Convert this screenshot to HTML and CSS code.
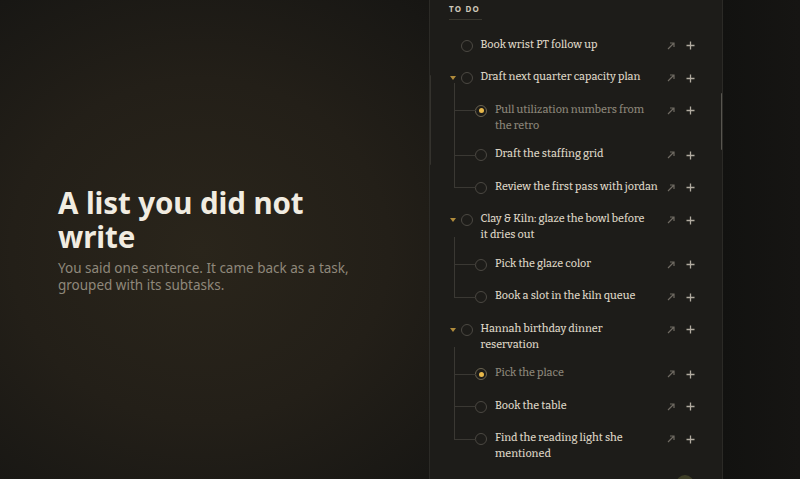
FILE: index.html
```html
<!DOCTYPE html>
<html lang="en">
<head>
<meta charset="utf-8">
<title>A list you did not write</title>
<link rel="stylesheet" href="styles.css">
</head>
<body>
<main class="stage">
  <section class="intro">
    <h1 class="intro-title">A list you did not write</h1>
    <p class="intro-sub">You said one sentence. It came back as a task, grouped with its subtasks.</p>
  </section>

  <section class="panel">
    <span class="thumb thumb-left"></span>
    <span class="thumb thumb-right"></span>
    <div class="scroll">
      <h2 class="label">TO DO</h2>
      <ul class="tasks">
        <li class="task">
          <div class="row">
            <span class="caret"></span>
            <span class="check"></span>
            <span class="title">Book wrist PT follow up</span>
            <span class="actions">
              <span class="act act-open"><svg viewBox="0 0 8 8" width="8" height="8"><path d="M1 7L7 1M3 1H7V5"/></svg></span>
              <span class="act act-add"><svg viewBox="0 0 9 9" width="9" height="9"><path d="M4.5 0.5V8.5M0.5 4.5H8.5"/></svg></span>
            </span>
          </div>
        </li>

        <li class="task">
          <div class="row">
            <span class="caret"><svg viewBox="0 0 6 4" width="6" height="4"><path d="M0 0H6L3 4Z"/></svg></span>
            <span class="check"></span>
            <span class="title">Draft next quarter capacity plan</span>
            <span class="actions">
              <span class="act act-open"><svg viewBox="0 0 8 8" width="8" height="8"><path d="M1 7L7 1M3 1H7V5"/></svg></span>
              <span class="act act-add"><svg viewBox="0 0 9 9" width="9" height="9"><path d="M4.5 0.5V8.5M0.5 4.5H8.5"/></svg></span>
            </span>
          </div>
          <ul class="subtasks">
            <li class="sub">
              <div class="row">
                <span class="check check-active"></span>
                <span class="title title-dim">Pull utilization numbers from the retro</span>
                <span class="actions">
                  <span class="act act-open"><svg viewBox="0 0 8 8" width="8" height="8"><path d="M1 7L7 1M3 1H7V5"/></svg></span>
                  <span class="act act-add"><svg viewBox="0 0 9 9" width="9" height="9"><path d="M4.5 0.5V8.5M0.5 4.5H8.5"/></svg></span>
                </span>
              </div>
            </li>
            <li class="sub">
              <div class="row">
                <span class="check"></span>
                <span class="title">Draft the staffing grid</span>
                <span class="actions">
                  <span class="act act-open"><svg viewBox="0 0 8 8" width="8" height="8"><path d="M1 7L7 1M3 1H7V5"/></svg></span>
                  <span class="act act-add"><svg viewBox="0 0 9 9" width="9" height="9"><path d="M4.5 0.5V8.5M0.5 4.5H8.5"/></svg></span>
                </span>
              </div>
            </li>
            <li class="sub">
              <div class="row">
                <span class="check"></span>
                <span class="title">Review the first pass with jordan</span>
                <span class="actions">
                  <span class="act act-open"><svg viewBox="0 0 8 8" width="8" height="8"><path d="M1 7L7 1M3 1H7V5"/></svg></span>
                  <span class="act act-add"><svg viewBox="0 0 9 9" width="9" height="9"><path d="M4.5 0.5V8.5M0.5 4.5H8.5"/></svg></span>
                </span>
              </div>
            </li>
          </ul>
        </li>

        <li class="task">
          <div class="row">
            <span class="caret"><svg viewBox="0 0 6 4" width="6" height="4"><path d="M0 0H6L3 4Z"/></svg></span>
            <span class="check"></span>
            <span class="title">Clay &amp; Kiln: glaze the bowl before<br>it dries out</span>
            <span class="actions">
              <span class="act act-open"><svg viewBox="0 0 8 8" width="8" height="8"><path d="M1 7L7 1M3 1H7V5"/></svg></span>
              <span class="act act-add"><svg viewBox="0 0 9 9" width="9" height="9"><path d="M4.5 0.5V8.5M0.5 4.5H8.5"/></svg></span>
            </span>
          </div>
          <ul class="subtasks">
            <li class="sub">
              <div class="row">
                <span class="check"></span>
                <span class="title">Pick the glaze color</span>
                <span class="actions">
                  <span class="act act-open"><svg viewBox="0 0 8 8" width="8" height="8"><path d="M1 7L7 1M3 1H7V5"/></svg></span>
                  <span class="act act-add"><svg viewBox="0 0 9 9" width="9" height="9"><path d="M4.5 0.5V8.5M0.5 4.5H8.5"/></svg></span>
                </span>
              </div>
            </li>
            <li class="sub">
              <div class="row">
                <span class="check"></span>
                <span class="title">Book a slot in the kiln queue</span>
                <span class="actions">
                  <span class="act act-open"><svg viewBox="0 0 8 8" width="8" height="8"><path d="M1 7L7 1M3 1H7V5"/></svg></span>
                  <span class="act act-add"><svg viewBox="0 0 9 9" width="9" height="9"><path d="M4.5 0.5V8.5M0.5 4.5H8.5"/></svg></span>
                </span>
              </div>
            </li>
          </ul>
        </li>

        <li class="task">
          <div class="row">
            <span class="caret"><svg viewBox="0 0 6 4" width="6" height="4"><path d="M0 0H6L3 4Z"/></svg></span>
            <span class="check"></span>
            <span class="title">Hannah birthday dinner reservation</span>
            <span class="actions">
              <span class="act act-open"><svg viewBox="0 0 8 8" width="8" height="8"><path d="M1 7L7 1M3 1H7V5"/></svg></span>
              <span class="act act-add"><svg viewBox="0 0 9 9" width="9" height="9"><path d="M4.5 0.5V8.5M0.5 4.5H8.5"/></svg></span>
            </span>
          </div>
          <ul class="subtasks">
            <li class="sub">
              <div class="row">
                <span class="check check-active"></span>
                <span class="title title-dim">Pick the place</span>
                <span class="actions">
                  <span class="act act-open"><svg viewBox="0 0 8 8" width="8" height="8"><path d="M1 7L7 1M3 1H7V5"/></svg></span>
                  <span class="act act-add"><svg viewBox="0 0 9 9" width="9" height="9"><path d="M4.5 0.5V8.5M0.5 4.5H8.5"/></svg></span>
                </span>
              </div>
            </li>
            <li class="sub">
              <div class="row">
                <span class="check"></span>
                <span class="title">Book the table</span>
                <span class="actions">
                  <span class="act act-open"><svg viewBox="0 0 8 8" width="8" height="8"><path d="M1 7L7 1M3 1H7V5"/></svg></span>
                  <span class="act act-add"><svg viewBox="0 0 9 9" width="9" height="9"><path d="M4.5 0.5V8.5M0.5 4.5H8.5"/></svg></span>
                </span>
              </div>
            </li>
            <li class="sub">
              <div class="row">
                <span class="check"></span>
                <span class="title">Find the reading light she mentioned</span>
                <span class="actions">
                  <span class="act act-open"><svg viewBox="0 0 8 8" width="8" height="8"><path d="M1 7L7 1M3 1H7V5"/></svg></span>
                  <span class="act act-add"><svg viewBox="0 0 9 9" width="9" height="9"><path d="M4.5 0.5V8.5M0.5 4.5H8.5"/></svg></span>
                </span>
              </div>
            </li>
          </ul>
        </li>
      </ul>
    </div>
    <span class="fab"></span>
  </section>

  <aside class="gutter"></aside>
</main>
</body>
</html>
```

FILE: styles.css
```css
* { box-sizing: border-box; }

html, body {
  margin: 0;
  padding: 0;
  height: 100%;
}

body {
  background: #141311;
  overflow: hidden;
}

.stage {
  display: flex;
  height: 479px;
  width: 800px;
  background:
    radial-gradient(ellipse 420px 380px at 200px 250px, #2a251b 0%, #231f18 45%, #181714 80%, #131210 100%);
}

.intro {
  flex: 0 0 429px;
  display: flex;
  flex-direction: column;
  justify-content: center;
  padding: 0 0 0 58px;
  font-family: "Noto Sans", "Open Sans", sans-serif;
}

.intro-title {
  margin: 0;
  font-size: 29.5px;
  line-height: 34px;
  font-weight: 700;
  color: #f1ece1;
  width: 300px;
  letter-spacing: -0.1px;
}

.intro-sub {
  margin: 6px 0 0;
  font-size: 13.5px;
  line-height: 17px;
  color: #8f887b;
  width: 300px;
}

.panel {
  position: relative;
  flex: 0 0 294px;
  height: 479px;
  background: #1d1c19;
  border-left: 1px solid #2b2a26;
  border-right: 1px solid #2b2a26;
  overflow: hidden;
}

.thumb {
  position: absolute;
  width: 2px;
  border-radius: 1px;
}

.thumb-left {
  left: -1px;
  top: 75px;
  height: 90px;
  background: #34322d;
}

.thumb-right {
  right: -1px;
  top: 93px;
  height: 57px;
  background: #57554f;
}

.scroll {
  padding: 4px 21px 0 19px;
}

.label {
  display: block;
  width: max-content;
  margin: 0 0 9px;
  padding: 0 2px 5px 0;
  font-family: "Noto Sans", "Open Sans", sans-serif;
  font-size: 8px;
  line-height: 10px;
  font-weight: 700;
  letter-spacing: 1.2px;
  color: #cfc8b9;
  border-bottom: 1px solid #3a382f;
}

.tasks, .subtasks {
  list-style: none;
  margin: 0;
  padding: 0;
}

.row {
  display: flex;
  align-items: flex-start;
  padding: 5.5px 0 5px;
  font-family: "Bitter", "Noto Serif", "DejaVu Serif", serif;
}

.caret {
  flex: 0 0 11.5px;
  height: 22px;
  display: flex;
  align-items: center;
  justify-content: flex-start;
  padding-left: 1px;
}

.caret svg { fill: #b08b3b; }

.check {
  flex: 0 0 12px;
  width: 12px;
  height: 12px;
  margin-top: 5px;
  border-radius: 50%;
  border: 1.2px solid #4b4842;
  display: flex;
  align-items: center;
  justify-content: center;
}

.check-active {
  border-color: #6a6351;
}

.check-active::after {
  content: "";
  width: 5px;
  height: 5px;
  border-radius: 50%;
  background: #e8b84a;
}

.title {
  flex: 1 1 auto;
  margin-left: 8px;
  padding-top: 2px;
  font-size: 10.8px;
  line-height: 16px;
  font-weight: 500;
  color: #dbd3c3;
}

.title-dim {
  color: #8a8478;
}

.actions {
  flex: 0 0 40px;
  height: 22px;
  display: flex;
  align-items: center;
  gap: 1px;
  margin-left: 2px;
}

.act {
  width: 19px;
  height: 19px;
  display: flex;
  align-items: center;
  justify-content: center;
}

.act svg { fill: none; }

.act-open svg {
  stroke: #6f6a62;
  stroke-width: 1.2;
}

.act-add svg {
  stroke: #b1aba0;
  stroke-width: 1.3;
}

.subtasks {
  position: relative;
  margin-left: 26px;
}

.subtasks::before {
  content: "";
  position: absolute;
  left: -21px;
  top: -11px;
  height: 11px;
  border-left: 1px solid #3a3833;
}

.sub {
  position: relative;
}

.sub::before {
  content: "";
  position: absolute;
  left: -21px;
  top: 0;
  width: 21px;
  height: 16px;
  border-left: 1px solid #3a3833;
  border-bottom: 1px solid #3a3833;
}

.sub:not(:last-child)::after {
  content: "";
  position: absolute;
  left: -21px;
  top: 15px;
  bottom: 0;
  border-left: 1px solid #3a3833;
}

.fab {
  position: absolute;
  left: 246px;
  top: 475px;
  width: 18px;
  height: 18px;
  border-radius: 50%;
  background: #3f3f28;
}

.gutter {
  flex: 1 1 auto;
  background: linear-gradient(90deg, #121210, #161513);
}
```
